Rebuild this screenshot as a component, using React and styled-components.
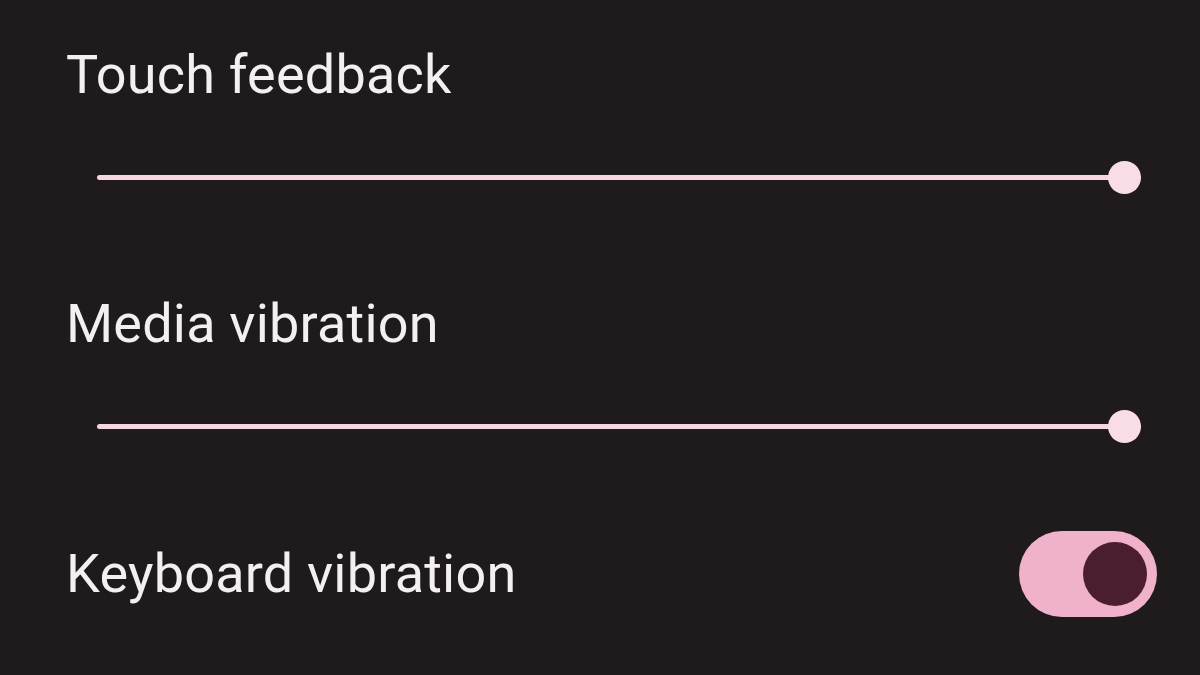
import styled, { createGlobalStyle } from "styled-components";

const GlobalStyle = createGlobalStyle`
  html, body {
    margin: 0;
    padding: 0;
    background: #1f1b1c;
  }
  body {
    font-family: Roboto, "Noto Sans", sans-serif;
  }
`;

const Page = styled.main`
  width: 1200px;
  height: 675px;
  box-sizing: border-box;
  padding: 43px 43px 0 66px;
  display: flex;
  flex-direction: column;
  color: #f4eff0;
`;

const Title = styled.h2`
  margin: 0;
  font-size: 54px;
  font-weight: 400;
  line-height: 64px;
  letter-spacing: 0.2px;
`;

const SliderRow = styled.div`
  height: 58px;
  margin: 41px 16px 86px 31px;
  display: flex;
  align-items: center;
  position: relative;
`;

const Track = styled.div`
  flex: 1;
  height: 5px;
  border-radius: 3px;
  background: #f5d6e1;
`;

const Thumb = styled.div`
  position: absolute;
  right: 0;
  top: 50%;
  width: 33px;
  height: 33px;
  margin-top: -16px;
  border-radius: 50%;
  background: #f9dde6;
`;

const ToggleRow = styled.div`
  display: flex;
  align-items: center;
  justify-content: space-between;
  margin-top: -10px;
`;

const Switch = styled.div`
  width: 138px;
  height: 86px;
  border-radius: 43px;
  background: #f0b1cb;
  display: flex;
  align-items: center;
  justify-content: ${(p) => (p.$on ? "flex-end" : "flex-start")};
  padding: 0 10px;
  box-sizing: border-box;
`;

const Knob = styled.div`
  width: 64px;
  height: 64px;
  border-radius: 50%;
  background: #4b1d31;
`;

const Slider = () => (
  <SliderRow>
    <Track />
    <Thumb />
  </SliderRow>
);

const App = () => {
  return (
    <>
      <GlobalStyle />
      <Page>
        <Title>Touch feedback</Title>
        <Slider />
        <Title>Media vibration</Title>
        <Slider />
        <ToggleRow>
          <Title>Keyboard vibration</Title>
          <Switch $on>
            <Knob />
          </Switch>
        </ToggleRow>
      </Page>
    </>
  );
};

export default App;
